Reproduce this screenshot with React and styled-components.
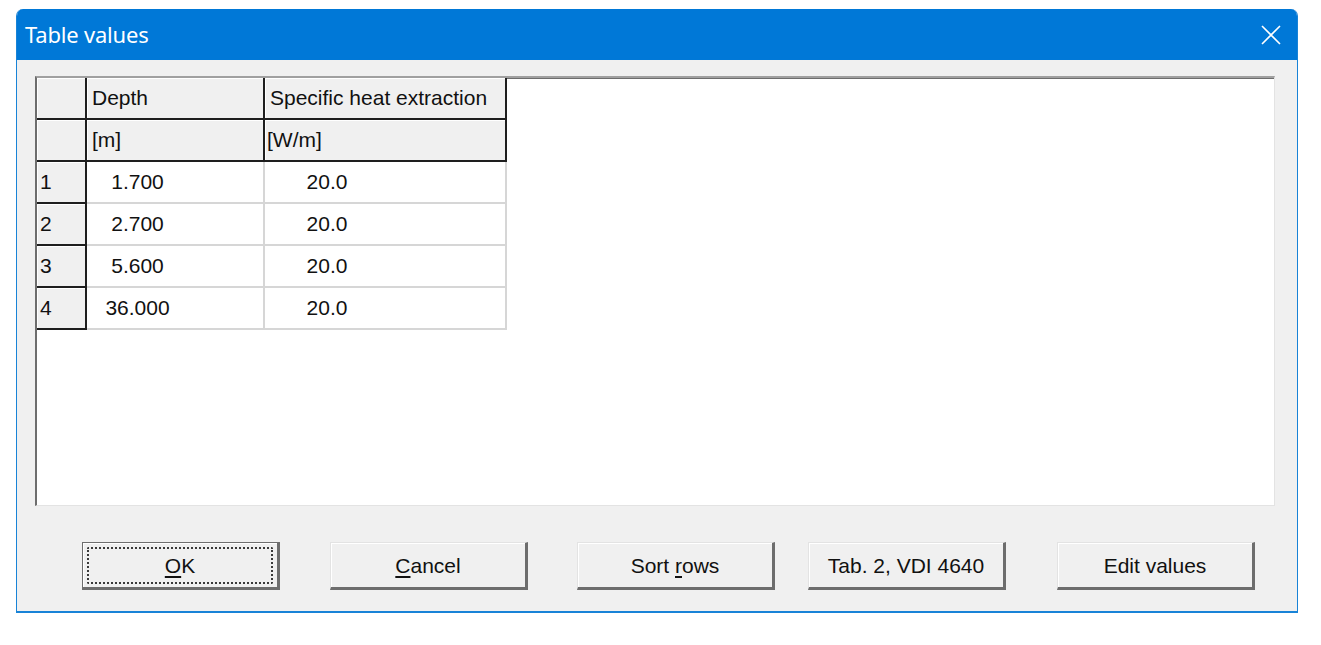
import React from 'react'
import styled, { createGlobalStyle } from 'styled-components'

const GlobalStyle = createGlobalStyle`
  html, body {
    margin: 0;
    padding: 0;
    background: #ffffff;
  }
  body {
    font-family: "Liberation Sans", Arial, sans-serif;
  }
`

const Page = styled.div`
  padding: 9px 0 0 16px;
  width: 1321px;
  height: 645px;
  box-sizing: border-box;
`

const Window = styled.div`
  width: 1282px;
  height: 604px;
  display: flex;
  flex-direction: column;
  background: #f0f0f0;
  border-left: 1px solid #1883d7;
  border-right: 1px solid #1883d7;
  border-bottom: 2px solid #1883d7;
  border-radius: 7px 7px 0 0;
  box-sizing: border-box;
  overflow: hidden;
`

const TitleBar = styled.div`
  height: 51px;
  flex: none;
  background: #0078d7;
  display: flex;
  align-items: center;
  justify-content: space-between;
  padding: 0 17px 0 9px;
  margin: 0 -1px;
`

const Title = styled.span`
  font-family: "Noto Sans", "Open Sans", sans-serif;
  font-size: 22px;
  color: #ffffff;
  letter-spacing: -0.2px;
  margin-top: -2px;
`

const CloseButton = styled.div`
  width: 20px;
  height: 20px;
  display: flex;
  align-items: center;
  justify-content: center;
`

const Body = styled.div`
  flex: 1;
  display: flex;
  flex-direction: column;
  padding: 16px 0 0 18px;
`

const Panel = styled.div`
  width: 1240px;
  height: 430px;
  background: #ffffff;
  box-sizing: border-box;
  border-top: 2px solid #a0a0a0;
  border-left: 2px solid #6d6d6d;
  border-right: 1px solid #e3e3e3;
  border-bottom: 1px solid #e3e3e3;
  box-shadow: inset 0 1px 0 #6d6d6d;
`

const Grid = styled.div`
  display: grid;
  grid-template-columns: 50px 178px 242px;
  grid-auto-rows: 42px;
  width: 470px;
`

const Cell = styled.div`
  box-sizing: border-box;
  display: flex;
  align-items: center;
  font-size: 21px;
  color: #111;
  padding-left: ${p => (p.$pad != null ? p.$pad : 5)}px;
  white-space: nowrap;
  background: ${p => (p.$head ? '#f0f0f0' : '#ffffff')};
  border-right: 2px solid ${p => (p.$head ? '#1e1e1e' : '#d6d6d6')};
  border-bottom: 2px solid ${p => (p.$head ? '#1e1e1e' : '#d6d6d6')};
  box-shadow: ${p => (p.$head ? 'inset 1px 1px 0 #ffffff' : 'none')};
`

const Num = styled.span`
  display: inline-block;
  width: ${p => p.$w}px;
  text-align: center;
`

const ButtonRow = styled.div`
  display: flex;
  padding: 36px 0 0 47px;
`

const Button = styled.div`
  width: 198px;
  height: 48px;
  margin-left: ${p => p.$gap || 0}px;
  box-sizing: border-box;
  display: flex;
  align-items: center;
  justify-content: center;
  position: relative;
  background: #f0f0f0;
  font-size: 21px;
  color: #111;
  padding-top: 2px;
  border-top: 1px solid ${p => (p.$default ? '#6d6d6d' : '#e3e3e3')};
  border-left: 1px solid ${p => (p.$default ? '#6d6d6d' : '#e3e3e3')};
  border-right: 3px solid #6d6d6d;
  border-bottom: 3px solid #6d6d6d;
  box-shadow: inset 1px 1px 0 #ffffff;
`

const Focus = styled.div`
  position: absolute;
  inset: 4px 4px 3px 4px;
  border: 2px dotted #3a3a3a;
  border-radius: 2px;
  pointer-events: none;
`

const Key = styled.span`
  text-decoration: underline;
  text-underline-offset: 3px;
`

const rows = [
  ['1', '1.700', '20.0'],
  ['2', '2.700', '20.0'],
  ['3', '5.600', '20.0'],
  ['4', '36.000', '20.0']
]

export default function App() {
  return (
    <Page>
      <GlobalStyle />
      <Window>
        <TitleBar>
          <Title>Table values</Title>
          <CloseButton>
            <svg width="20" height="20" viewBox="0 0 20 20">
              <path d="M1 1 L19 19 M19 1 L1 19" stroke="#ffffff" strokeWidth="1.6" fill="none" />
            </svg>
          </CloseButton>
        </TitleBar>
        <Body>
          <Panel>
            <Grid>
              <Cell $head />
              <Cell $head>Depth</Cell>
              <Cell $head>Specific heat extraction</Cell>
              <Cell $head />
              <Cell $head>[m]</Cell>
              <Cell $head $pad={2}>[W/m]</Cell>
              {rows.map(r => (
                <React.Fragment key={r[0]}>
                  <Cell $head $pad={3}>{r[0]}</Cell>
                  <Cell $pad={0}><Num $w={101}>{r[1]}</Num></Cell>
                  <Cell $pad={0}><Num $w={124}>{r[2]}</Num></Cell>
                </React.Fragment>
              ))}
            </Grid>
          </Panel>
          <ButtonRow>
            <Button $default>
              <Focus />
              <span><Key>O</Key>K</span>
            </Button>
            <Button $gap={50}><span><Key>C</Key>ancel</span></Button>
            <Button $gap={49}><span>Sort <Key>r</Key>ows</span></Button>
            <Button $gap={33}>Tab. 2, VDI 4640</Button>
            <Button $gap={51}>Edit values</Button>
          </ButtonRow>
        </Body>
      </Window>
    </Page>
  )
}
